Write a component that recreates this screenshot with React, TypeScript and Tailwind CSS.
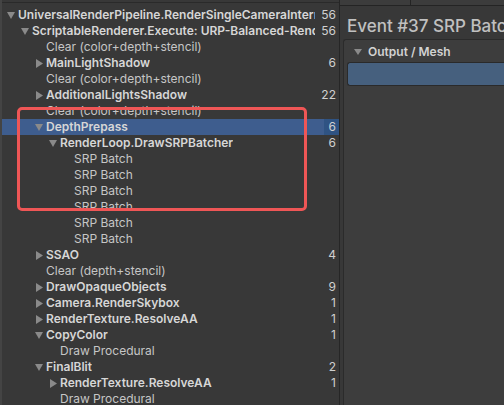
import React from 'react';

type Node = { label: string; level: number; arrow?: 'down' | 'right'; count?: number; selected?: boolean };

const rows: Node[] = [
  { label: 'UniversalRenderPipeline.RenderSingleCameraInternal', level: 0, arrow: 'down', count: 56 },
  { label: 'ScriptableRenderer.Execute: URP-Balanced-Renderer', level: 1, arrow: 'down', count: 56 },
  { label: 'Clear (color+depth+stencil)', level: 2 },
  { label: 'MainLightShadow', level: 2, arrow: 'right', count: 6 },
  { label: 'Clear (color+depth+stencil)', level: 2 },
  { label: 'AdditionalLightsShadow', level: 2, arrow: 'right', count: 22 },
  { label: 'Clear (color+depth+stencil)', level: 2 },
  { label: 'DepthPrepass', level: 2, arrow: 'down', count: 6, selected: true },
  { label: 'RenderLoop.DrawSRPBatcher', level: 3, arrow: 'down', count: 6 },
  { label: 'SRP Batch', level: 4 },
  { label: 'SRP Batch', level: 4 },
  { label: 'SRP Batch', level: 4 },
  { label: 'SRP Batch', level: 4 },
  { label: 'SRP Batch', level: 4 },
  { label: 'SRP Batch', level: 4 },
  { label: 'SSAO', level: 2, arrow: 'right', count: 4 },
  { label: 'Clear (depth+stencil)', level: 2 },
  { label: 'DrawOpaqueObjects', level: 2, arrow: 'right', count: 9 },
  { label: 'Camera.RenderSkybox', level: 2, arrow: 'right', count: 1 },
  { label: 'RenderTexture.ResolveAA', level: 2, arrow: 'right', count: 1 },
  { label: 'CopyColor', level: 2, arrow: 'down', count: 1 },
  { label: 'Draw Procedural', level: 3 },
  { label: 'FinalBlit', level: 2, arrow: 'down', count: 2 },
  { label: 'RenderTexture.ResolveAA', level: 3, arrow: 'right', count: 1 },
  { label: 'Draw Procedural', level: 3 },
];

const indent = ['pl-[2px]', 'pl-[16px]', 'pl-[30px]', 'pl-[44px]', 'pl-[58px]'];

function Arrow({ dir }: { dir: 'down' | 'right' }) {
  return dir === 'down' ? (
    <svg width="8" height="7" viewBox="0 0 8 7"><polygon points="0,0 8,0 4,7" fill="#8a8a8a" /></svg>
  ) : (
    <svg width="7" height="9" viewBox="0 0 7 9"><polygon points="0,0 7,4.5 0,9" fill="#8a8a8a" /></svg>
  );
}

function Row({ n }: { n: Node }) {
  const bold = !!n.arrow;
  return (
    <div className={`flex h-4 items-center ${n.selected ? 'bg-[#3e5d8e]' : ''}`}>
      <div className={`flex min-w-0 flex-1 items-center ${indent[n.level]}`}>
        <span className="flex w-[14px] shrink-0 items-center justify-center">{n.arrow ? <Arrow dir={n.arrow} /> : null}</span>
        <span className={`min-w-0 overflow-hidden whitespace-nowrap ${bold ? 'font-semibold text-[#d6d6d6]' : 'text-[#c6c6c6]'}`}>{n.label}</span>
      </div>
      <div className="flex h-4 w-[24px] shrink-0 items-center justify-end">
        <span className={`flex h-4 min-w-[15px] items-center justify-end pr-[3px] ${n.selected ? 'bg-[#2f5383]' : ''} ${bold ? 'text-[#d0d0d0]' : ''}`}>
          {n.count ?? ''}
        </span>
      </div>
    </div>
  );
}

export default function App() {
  return (
    <div className="flex h-[405px] w-[504px] overflow-hidden bg-[#383838] text-[12px] leading-4" style={{ fontFamily: 'Inter, "Noto Sans", sans-serif' }}>
      {/* event tree */}
      <div className="relative flex w-[340px] shrink-0 flex-col border-r border-[#262626] border-l-2 border-l-[#444444]">
        <div className="h-[7px] shrink-0">
          <div className="h-[3px] border-b border-[#2a2a2a]" />
        </div>
        <div>
          {rows.map((n, i) => (
            <Row key={i} n={n} />
          ))}
        </div>
        <div className="pointer-events-none absolute left-[15px] top-[107px] h-[104px] w-[290px] rounded-[5px] border-[3px] border-[#ef5656]" />
      </div>

      {/* details */}
      <div className="flex min-w-0 flex-1 flex-col">
        <div className="flex h-[6px] shrink-0 border-b border-[#242424] bg-[#3c3c3c]">
          <div className="w-[71px] border-r border-[#242424]" />
        </div>
        <div className="whitespace-nowrap pl-[7px] pt-[9px] text-[17px] leading-[22px] font-medium text-[#c0c0c0]">Event #37 SRP Batch</div>
        <div className="ml-[3px] mt-[2px] flex flex-1 flex-col rounded-tl-[3px] border-l border-t border-[#2b2b2b] bg-[#3d3d3d]">
          <div className="flex h-[22px] items-center pl-[10px] pt-[2px]">
            <svg width="8" height="6" viewBox="0 0 8 6"><polygon points="0,0 8,0 4,6" fill="#8a8a8a" /></svg>
            <span className="ml-[6px] font-semibold text-[#d2d2d2]">Output / Mesh</span>
          </div>
          <div className="ml-[3px] h-[24px] rounded-l-[3px] border border-r-0 border-[#2a2a2a] bg-[#46607e]" />
        </div>
      </div>
    </div>
  );
}
